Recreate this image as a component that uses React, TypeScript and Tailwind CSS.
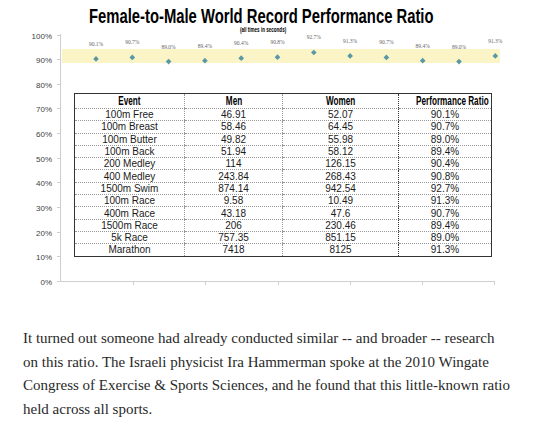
import React from "react";

// 種目ごとの記録（男子・女子・比率）
const rows = [
  ["100m Free", "46.91", "52.07", "90.1%"],
  ["100m Breast", "58.46", "64.45", "90.7%"],
  ["100m Butter", "49.82", "55.98", "89.0%"],
  ["100m Back", "51.94", "58.12", "89.4%"],
  ["200 Medley", "114", "126.15", "90.4%"],
  ["400 Medley", "243.84", "268.43", "90.8%"],
  ["1500m Swim", "874.14", "942.54", "92.7%"],
  ["100m Race", "9.58", "10.49", "91.3%"],
  ["400m Race", "43.18", "47.6", "90.7%"],
  ["1500m Race", "206", "230.46", "89.4%"],
  ["5k Race", "757.35", "851.15", "89.0%"],
  ["Marathon", "7418", "8125", "91.3%"],
];

const ratios = [90.1, 90.7, 89.0, 89.4, 90.4, 90.8, 92.7, 91.3, 90.7, 89.4, 89.0, 91.3];

const yOf = (v: number) => 281 - v * 2.465;

const sans = { fontFamily: '"Liberation Sans", Arial, sans-serif' };

const HeadCell = ({ label, className }: { label: string; className: string }) => (
  <th className={`p-0 font-bold text-[12px] leading-[14px] whitespace-nowrap text-black ${className}`} style={sans}>
    <span className="inline-block scale-x-[0.68]">{label}</span>
  </th>
);

const Chart = () => {
  return (
    <div className="relative h-[300px] w-full">
      {/* 軸・帯・プロット */}
      <svg className="absolute inset-0" width="535" height="300">
        <rect x="62" y="49" width="438" height="14" fill="#faf4c6" />
        <line x1="60.5" y1="34" x2="60.5" y2="282" stroke="#cfcfcf" />
        <line x1="60" y1="281.5" x2="495" y2="281.5" stroke="#cfcfcf" />
        {Array.from({ length: 11 }).map((_, i) => {
          const y = Math.round(yOf(i * 10)) + 0.5;
          return (
            <g key={i}>
              <line x1="57" y1={y} x2="60" y2={y} stroke="#cfcfcf" />
              <text
                x="52"
                y={y + 3}
                textAnchor="end"
                fontSize="8"
                fill="#3f3f3f"
                fontFamily="Liberation Sans, sans-serif"
              >
                {i * 10}%
              </text>
            </g>
          );
        })}
        {[133, 205, 278, 350, 422, 494].map((x) => (
          <line key={x} x1={x + 0.5} y1="282" x2={x + 0.5} y2="285" stroke="#cfcfcf" />
        ))}
        {ratios.map((v, i) => {
          const x = 96 + i * 36.3;
          const y = yOf(v);
          return (
            <g key={i}>
              <rect
                x={x - 2}
                y={y - 2}
                width="4"
                height="4"
                fill="#5b98a6"
                transform={`rotate(45 ${x} ${y})`}
              />
              <text
                x={x}
                y={y - 13}
                textAnchor="middle"
                fontSize="5.5"
                fill="#666"
                fontFamily="Liberation Serif, serif"
              >
                {v.toFixed(1)}%
              </text>
            </g>
          );
        })}
      </svg>

      {/* タイトル */}
      <div className="relative pt-[5px] w-[523px] text-center text-black" style={sans}>
        <div className="text-[21px] leading-[22px] font-bold whitespace-nowrap">
          <span className="inline-block scale-x-[0.705]">
            Female-to-Male World Record Performance Ratio
          </span>
        </div>
        <div className="text-[6.5px] leading-[5px] font-bold whitespace-nowrap pl-[4px]">
          <span className="inline-block scale-x-[0.7]">(all times in seconds)</span>
        </div>
      </div>

      {/* データ表 */}
      <table
        className="absolute left-[74px] top-[93px] w-[418px] table-fixed border-collapse border border-[#333] text-[10px] text-[#1a1a1a] text-center"
        style={sans}
      >
        <thead>
          <tr className="h-[15px]">
            <HeadCell label="Event" className="w-[110px] border-b border-dotted border-[#999]" />
            <HeadCell label="Men" className="w-[98px] border-b border-l border-dotted border-[#999]" />
            <HeadCell label="Women" className="w-[116px] border-b border-l border-dotted border-[#999]" />
            <HeadCell label="Performance Ratio" className="border-b border-dotted border-[#999] border-l border-l-solid border-l-[#333]" />
          </tr>
        </thead>
        <tbody>
          {rows.map((r, i) => (
            <tr key={i} className="h-[12.3px] leading-[11px]">
              <td className="border-b border-dotted border-[#999] p-0">{r[0]}</td>
              <td className="border-b border-l border-dotted border-[#999] p-0">{r[1]}</td>
              <td className="border-b border-l border-dotted border-[#999] p-0">{r[2]}</td>
              <td className="border-b border-dotted border-[#999] border-l border-l-solid border-l-[#333] p-0">{r[3]}</td>
            </tr>
          ))}
        </tbody>
      </table>
    </div>
  );
};

const App = () => {
  return (
    <div className="w-[535px] h-[442px] bg-white overflow-hidden">
      <Chart />
      <p
        className="mt-[27px] px-[23px] text-[15px] leading-[23.5px] text-[#292929]"
        style={{ fontFamily: '"Liberation Serif", serif' }}
      >
        It turned out someone had already conducted similar -- and broader -- research on this
        ratio. The Israeli physicist Ira Hammerman spoke at the 2010 Wingate Congress of Exercise
        &amp; Sports Sciences, and he found that this little-known ratio held across all sports.
      </p>
    </div>
  );
};

export default App;
